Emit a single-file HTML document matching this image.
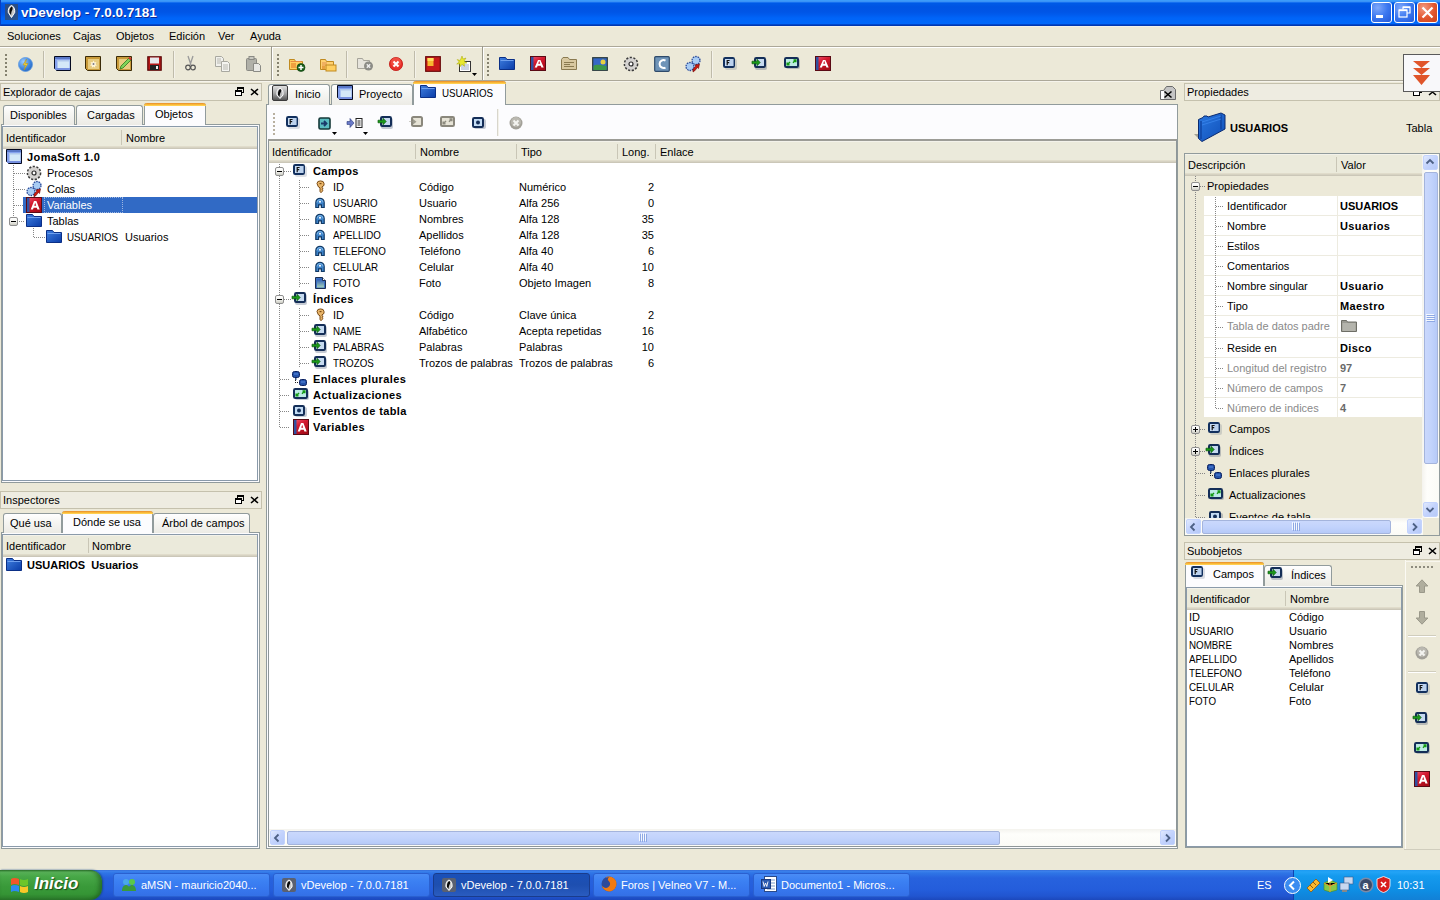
<!DOCTYPE html><html><head><meta charset="utf-8"><title>vDevelop</title><style>
*{margin:0;padding:0;box-sizing:border-box}
html,body{width:1440px;height:900px;overflow:hidden;background:#ECE9D8;font-family:"Liberation Sans",sans-serif;font-size:11px;color:#000}
.a{position:absolute}
svg{position:absolute;overflow:visible}
.t{position:absolute;white-space:nowrap;line-height:13px;margin-left:-1px}
.b{font-weight:bold}
.titlebar{left:0;top:0;width:1440px;height:26px;background:linear-gradient(#3D9BFA 0 1px,#3A92F6 1px 2px,#1570F0 2px 3px,#0059E6 3px 4px,#0054E3 7px,#0055E6 12px,#005CEE 15px,#0064F8 18px,#0068FA 23px 24px,#0048CC 24px 25px,#0038B0 25px 26px)}
.tb{left:0;top:48px;width:1440px;height:32px;background:#ECE9D8}
.ptitle{height:18px;border:1px solid #C5C1AD;background:#EEECE1}
.tab{border:1px solid #919B9C;border-bottom:none;border-radius:3px 3px 0 0;background:linear-gradient(#FFFFFF,#F6F6F3 40%,#ECEBE5)}
.tab.act{background:#FCFCFE;border-top:none}
.tab.act:before{content:"";position:absolute;left:-1px;right:-1px;top:0;height:3px;border-radius:3px 3px 0 0;background:linear-gradient(#E68B2C,#FFC73C 70%,#FFD96A)}
.pane{border:1px solid #919B9C;background:#FCFCFE}
.list{border:1px solid #8A9AAA;background:#fff}
.hdr{height:22px!important;background:linear-gradient(#F3F2EA 0 1px,#EBEADB 1px 19px,#E0DCCB 19px 20px,#D6D2C2 20px 21px,#CBC7B8 21px 22px)}
.hsep{width:1px;background:#C9C6B6}
.sel{background:#316AC5}
.dv{width:1px;background:repeating-linear-gradient(to bottom,#868686 0 1px,transparent 1px 2px)}
.dh{height:1px;background:repeating-linear-gradient(to right,#868686 0 1px,transparent 1px 2px)}
.exp{width:9px;height:9px;border:1px solid #8F8F8F;border-radius:2px;background:linear-gradient(#FFFFFF,#F2F2EE 50%,#CDCDC4)}
.exp:after{content:"";position:absolute;left:1px;top:3px;width:5px;height:1px;background:#000}
.exp.plus:before{content:"";position:absolute;left:3px;top:1px;width:1px;height:5px;background:#000}
.sep{width:2px;background:#BFBBAA;border-right:1px solid #F4F2EA}
.grip{width:2px;background:repeating-linear-gradient(to bottom,#85826F 0 2px,transparent 2px 4px)}
.sbtn{border-radius:2px;background:linear-gradient(135deg,#E0E9FE,#C3D3FD 50%,#B6C9F8);border:1px solid #C3D3FD}
.thumb{border-radius:2px;border:1px solid #A4B4DC;background:#C1D3FB}
</style></head><body>
<div class="a titlebar"></div>
<div class="a" style="left:0;top:0;width:1px;height:26px;background:#0A3FC0"></div><div class="a" style="left:0;top:26px;width:1440px;height:1px;background:#F2F1EA"></div>
<svg style="left:5px;top:4px" width="13" height="16" viewBox="0 0 13 16" ><rect x="0" y="0" width="13" height="16" fill="#3C4A5C" opacity=".7"/><path d="M6.5 1.5C3.8 2.5 3 5.5 3.3 8.5l3.2 5 3.2-5c.3-3-.5-6-3.2-7z" fill="#C8C8C8" stroke="#fff" stroke-width="1"/><path d="M6.7 2.5C5 3.3 4.2 6 4.4 8.5l1.7 2.7c0-2.5.4-3.8 1.2-5.3.7-1.3.4-2.8-.6-3.4z" fill="#0A0A0A"/></svg>
<div class="t b" style="left:22px;top:5px;font-size:13.5px;line-height:15px;color:#fff;text-shadow:1px 1px 0 #0A2A9A">vDevelop - 7.0.0.7181</div>
<div class="a" style="left:1371px;top:2px;width:21px;height:21px;border:1px solid #fff;border-radius:3px;background:radial-gradient(circle at 30% 25%,#7FA8FA,#3C78F0 50%,#2358D8)"></div>
<svg style="left:1371px;top:2px" width="21" height="21" viewBox="0 0 21 21" ><rect x="5" y="13" width="7" height="3" fill="#fff"/></svg>
<div class="a" style="left:1394px;top:2px;width:21px;height:21px;border:1px solid #fff;border-radius:3px;background:radial-gradient(circle at 30% 25%,#7FA8FA,#3C78F0 50%,#2358D8)"></div>
<svg style="left:1394px;top:2px" width="21" height="21" viewBox="0 0 21 21" ><rect x="5" y="8" width="8" height="7" fill="none" stroke="#fff" stroke-width="1.2"/><rect x="5" y="7.5" width="8" height="1.6" fill="#fff"/><path d="M9 7V5h7v6h-3" fill="none" stroke="#fff" stroke-width="1.2"/><rect x="9" y="4.5" width="7" height="1.6" fill="#fff"/></svg>
<div class="a" style="left:1417px;top:2px;width:21px;height:21px;border:1px solid #fff;border-radius:3px;background:radial-gradient(circle at 30% 25%,#F39A80,#E2562E 55%,#C9421C)"></div>
<svg style="left:1417px;top:2px" width="21" height="21" viewBox="0 0 21 21" ><path d="M5.5 5.5l10 10M15.5 5.5l-10 10" stroke="#fff" stroke-width="2.2"/></svg>
<div class="t" style="left:8px;top:30px">Soluciones</div>
<div class="t" style="left:74px;top:30px">Cajas</div>
<div class="t" style="left:117px;top:30px">Objetos</div>
<div class="t" style="left:170px;top:30px">Edición</div>
<div class="t" style="left:219px;top:30px">Ver</div>
<div class="t" style="left:251px;top:30px">Ayuda</div>
<div class="a" style="left:0;top:46px;width:1440px;height:1px;background:#ACA899"></div>
<div class="a" style="left:0;top:47px;width:1440px;height:1px;background:#FFFFFF"></div>
<div class="a tb"></div>
<div class="a" style="left:0;top:80px;width:1440px;height:1px;background:#ACA899"></div>
<div class="a" style="left:0;top:81px;width:1440px;height:1px;background:#F6F4EC"></div>
<div class="a grip" style="left:5px;top:54px;height:22px"></div>
<div class="a grip" style="left:277px;top:54px;height:22px"></div>
<div class="a grip" style="left:487px;top:54px;height:22px"></div>
<div class="a sep" style="left:43px;top:51px;height:27px"></div>
<div class="a sep" style="left:173px;top:51px;height:27px"></div>
<div class="a sep" style="left:346px;top:51px;height:27px"></div>
<div class="a sep" style="left:414px;top:51px;height:27px"></div>
<div class="a sep" style="left:711px;top:51px;height:27px"></div>
<div class="a" style="left:271px;top:46px;width:1px;height:34px;background:#9C9A8C"></div><div class="a" style="left:272px;top:48px;width:1px;height:32px;background:#FFFFFF"></div>
<div class="a" style="left:482px;top:46px;width:1px;height:34px;background:#9C9A8C"></div><div class="a" style="left:483px;top:48px;width:1px;height:32px;background:#FFFFFF"></div>
<svg style="left:18px;top:57px" width="15" height="15" viewBox="0 0 15 15" ><defs><radialGradient id="gl" cx=".35" cy=".3" r=".8"><stop offset="0" stop-color="#9CCBFF"/><stop offset=".6" stop-color="#3F86E0"/><stop offset="1" stop-color="#2060B8"/></radialGradient></defs><circle cx="7.5" cy="7.5" r="7" fill="url(#gl)" stroke="#5F9BE0" stroke-width=".8"/><path d="M8.5 2l-3.5 6h2.5l-1.5 5 4-6.5h-2.5z" fill="#F3D23A" stroke="#B58F10" stroke-width=".5"/></svg>
<svg style="left:54px;top:56px" width="17" height="15" viewBox="0 0 17 15" ><path d="M.5 .5h16v14h-14l-2-2z" fill="#86A2EE" stroke="#050A20"/><path d="M1 1h15v2h-15z" fill="#5A78C8"/><rect x="3.5" y="4" width="12" height="8" fill="#D4E8F8"/><rect x="3.5" y="4" width="12" height="1.5" fill="#B0C8EC"/><rect x="1" y="12" width="15" height="2" fill="#7690E0"/></svg>
<svg style="left:85px;top:56px" width="16" height="15" viewBox="0 0 16 15" ><path d="M.5 .5h15v14h-13l-2-2z" fill="#C89A3A" stroke="#3A2A08"/><rect x="3" y="3" width="11" height="10" fill="#E8CC80"/><path d="M8.5 4.5l1 2 2-.5-1 2 1.5 1.5-2 .3.2 2-1.7-1.2-1.7 1.2.2-2-2-.3 1.5-1.5-1-2 2 .5z" fill="#FFF6DC"/><circle cx="8.5" cy="8" r="1" fill="#7A7A88"/></svg>
<svg style="left:116px;top:56px" width="17" height="15" viewBox="0 0 17 15" ><path d="M.5 .5h15v14h-13l-2-2z" fill="#C89A3A" stroke="#3A2A08"/><rect x="3" y="3" width="11" height="10" fill="#E8CC80"/><path d="M4 13l1-3 8-8 2 2-8 8z" fill="#7ED35A" stroke="#2C7A1C" stroke-width=".8"/><path d="M13 1.5l2 2" stroke="#D03030" stroke-width="2"/></svg>
<svg style="left:147px;top:56px" width="15" height="15" viewBox="0 0 15 15" ><rect x=".8" y=".8" width="13.4" height="13.4" fill="#B81818" stroke="#5A0808" stroke-width="1.2"/><rect x="3" y="1.5" width="9" height="6" fill="#E8E8EC"/><rect x="3" y="9" width="9" height="5" fill="#222"/><rect x="9" y="10" width="2" height="3" fill="#eee"/></svg>
<svg style="left:185px;top:56px" width="11" height="15" viewBox="0 0 11 15" ><path d="M3 0l3 9M8 0l-3 9" stroke="#9A9A9A" stroke-width="1.3"/><circle cx="3" cy="11.5" r="2.3" fill="none" stroke="#555" stroke-width="1.2"/><circle cx="8" cy="11.5" r="2.3" fill="none" stroke="#555" stroke-width="1.2"/></svg>
<svg style="left:215px;top:56px" width="16" height="16" viewBox="0 0 16 16" ><path d="M.5 .5h6l2 2v8h-8z" fill="#F0F0EC" stroke="#A8A8A0"/><path d="M6.5 5.5h6l2 2v8h-8z" fill="#F4F4F0" stroke="#A8A8A0"/><path d="M2 3h4M2 5h4M2 7h4M8 9h5M8 11h5M8 13h5" stroke="#B8B8B0"/></svg>
<svg style="left:246px;top:56px" width="16" height="16" viewBox="0 0 16 16" ><rect x=".5" y="2.5" width="10" height="12" rx="1" fill="#B0B0A8" stroke="#8A8A84"/><rect x="3" y=".5" width="5" height="3" fill="#C8C8C0" stroke="#8A8A84"/><path d="M7.5 7.5h5l2 2v6h-7z" fill="#E8E8E4" stroke="#8A8A84"/></svg>
<svg style="left:289px;top:56px" width="17" height="16" viewBox="0 0 17 16" ><path d="M.5 3.5v10h13v-8h-7l-1-2z" fill="#FFCF60" stroke="#C08A20"/><path d="M1.5 5.5h11" stroke="#E88A40"/><rect x="2" y="7" width="5" height="5" fill="#F0A040"/><circle cx="12" cy="11.5" r="4" fill="#1A5E1A" stroke="#0A3A0A" stroke-width=".6"/><path d="M12 9v5M9.5 11.5h5" stroke="#fff" stroke-width="1.5"/></svg>
<svg style="left:320px;top:56px" width="17" height="16" viewBox="0 0 17 16" ><path d="M.5 3.5v10h13v-8h-7l-1-2z" fill="#FFD070" stroke="#C08A20"/><rect x="2" y="6" width="5" height="4" fill="#F0B060"/><rect x="6" y="9" width="10" height="6" fill="#FFCF60" stroke="#C08A20"/><rect x="2" y="10" width="3" height="3" fill="#E8A040"/></svg>
<svg style="left:357px;top:56px" width="17" height="15" viewBox="0 0 17 15" ><path d="M.5 2.5v10h12v-8h-6l-1-2z" fill="#E6E4DC" stroke="#A6A49A"/><circle cx="11.5" cy="10" r="4.5" fill="#8C8C86"/><path d="M9.8 8.3l3.4 3.4M13.2 8.3l-3.4 3.4" stroke="#EEE" stroke-width="1.4"/></svg>
<svg style="left:389px;top:57px" width="14" height="14" viewBox="0 0 14 14" ><circle cx="7" cy="7" r="6.6" fill="#E8302A" stroke="#C01A14" stroke-width=".8"/><circle cx="7" cy="5.5" r="5" fill="#F86A5A" opacity=".5"/><path d="M4.5 4.5l5 5M9.5 4.5l-5 5" stroke="#fff" stroke-width="2"/></svg>
<svg style="left:425px;top:56px" width="16" height="16" viewBox="0 0 16 16" ><rect x=".7" y=".7" width="14.6" height="14.6" fill="#C81A1A" stroke="#6A0A0A" stroke-width="1.2"/><rect x="2.5" y="2" width="6" height="8" fill="#F8B830"/><rect x="2.5" y="2" width="6" height="3" fill="#FFE060"/></svg>
<svg style="left:456px;top:56px" width="16" height="16" viewBox="0 0 16 16" ><rect x="3.5" y="5.5" width="11" height="10" fill="#fff" stroke="#333"/><path d="M5 9h8M5 11h8M5 13h8" stroke="#9AA8C8"/><path d="M6 0l1 3 3-1-2 3 3 2-3 .3.5 3-2.5-2-2 2.5-.3-3-3 .2 2.5-2-2-2.5 3 1z" fill="#E8E830" stroke="#A8A800" stroke-width=".5"/></svg>
<svg style="left:472px;top:73px" width="5" height="3" viewBox="0 0 5 3" ><path d="M0 0h5l-2.5 3z" fill="#000"/></svg>
<svg style="left:499px;top:57px" width="16" height="13" viewBox="0 0 16 13" ><defs><linearGradient id="fg" x1="0" y1="0" x2="1" y2="1"><stop offset="0" stop-color="#3F7FE0"/><stop offset="1" stop-color="#0A3CA8"/></linearGradient></defs><path d="M0.5 0.5h6l1.5 2h7.5v10h-15z" fill="url(#fg)" stroke="#0B2F86"/><path d="M1.5 3.5h13" stroke="#6FA0EE"/></svg>
<svg style="left:530px;top:56px" width="16" height="15" viewBox="0 0 16 15" ><defs><linearGradient id="vr" x1="0" y1="0" x2=".6" y2="1"><stop offset="0" stop-color="#F05A78"/><stop offset=".45" stop-color="#D41A30"/><stop offset="1" stop-color="#A80C18"/></linearGradient></defs><rect x=".5" y=".5" width="15" height="14" fill="url(#vr)" stroke="#5A0A14"/><rect x="1" y="1" width="2.5" height="13" fill="#3050A0"/><path d="M4.7 11.5L8 4h2.4l3.3 7.5h-2.3l-.6-1.8h-3.2l-.6 1.8z M8.2 7.7h2l-1-3z" fill="#fff" fill-rule="evenodd"/></svg>
<svg style="left:561px;top:57px" width="16" height="13" viewBox="0 0 16 13" ><path d="M.5 2.5v10h15v-10h-7l-1.5-2h-5l-1.5 2z" fill="#D8C8A0" stroke="#8A7A50"/><path d="M3 5.5h10M3 7.5h6M3 9.5h10" stroke="#8A7A50"/></svg>
<svg style="left:592px;top:57px" width="16" height="14" viewBox="0 0 16 14" ><rect x=".7" y=".7" width="14.6" height="12.6" fill="#3468C8" stroke="#2A3A3A" stroke-width="1.2"/><path d="M1.5 9c3-2 6-1 13 0v4h-13z" fill="#3C9848"/><circle cx="11" cy="5" r="2.5" fill="#E8D040"/></svg>
<svg style="left:623px;top:56px" width="16" height="16" viewBox="0 0 16 16" ><circle cx="8" cy="8" r="6.6" fill="#D4D2D0" stroke="#3A3A3A" stroke-width="1.5" stroke-dasharray="2.2 1.5"/><circle cx="8" cy="8" r="2" fill="#fff" stroke="#2A2A2A" stroke-width="1.2"/></svg>
<svg style="left:654px;top:56px" width="16" height="16" viewBox="0 0 16 16" ><rect x=".7" y=".7" width="14.6" height="14.6" rx="1" fill="#6F94B8" stroke="#2E4A6A" stroke-width="1.2"/><path d="M11.5 4.5a4 4 0 1 0 0 7" fill="none" stroke="#fff" stroke-width="2"/></svg>
<svg style="left:685px;top:56px" width="17" height="17" viewBox="0 0 17 17" ><circle cx="11" cy="4.5" r="4" fill="#A8CCF4" stroke="#2A4A9A" stroke-width="1.3" stroke-dasharray="1.6 .9"/><circle cx="5" cy="10.5" r="4" fill="#A8CCF4" stroke="#2A4A9A" stroke-width="1.3" stroke-dasharray="1.6 .9"/><path d="M8 16v-3l3-3-1-1 4.5-1-1 4.5-1-1-3 3.5z" fill="#C81A10" stroke="#6A0A0A" stroke-width=".6"/></svg>
<svg style="left:723px;top:57px" width="14" height="13" viewBox="0 0 14 13" ><rect x="2" y="2" width="12" height="11" rx="2" fill="#1C2F52" opacity=".15"/><rect x="1" y="1" width="10" height="9" rx="1.2" fill="#C8DCF4" stroke="#12305E" stroke-width="2"/><rect x="6" y="2" width="5" height="7" fill="#B4CCEA" opacity=".6"/><path d="M4.2 3v5.2M4 3.5h2.6M4 5.7h2.2" stroke="#111" stroke-width="1.2" fill="none"/></svg>
<svg style="left:752px;top:57px" width="15" height="13" viewBox="0 0 15 13" ><rect x="3" y="2" width="12" height="11" rx="2" fill="#1C2F52" opacity=".25"/><rect x="3" y="1" width="10" height="9" rx="1.2" fill="#C6DAF0" stroke="#142E58" stroke-width="2"/><path d="M0 4.2h5v-2l3.2 3.3-3.2 3.3v-2h-5z" fill="#1A9A1A" stroke="#0A5A0A" stroke-width=".7"/></svg>
<svg style="left:784px;top:57px" width="16" height="12" viewBox="0 0 16 12" ><rect x="2" y="2" width="14" height="10" rx="2" fill="#1C2F52" opacity="0.25"/><rect x="1" y="1" width="13" height="9" rx="1.2" fill="#BDEBE4" stroke="#142E58" stroke-width="2"/><path d="M3.5 7.5l2.5-2.5M3.2 5.5v2.3h2.3M11.5 3.2l-2.5 2.5M11.8 5.2V3H9.5" stroke="#149A14" stroke-width="1.5" fill="none"/></svg>
<svg style="left:815px;top:56px" width="16" height="15" viewBox="0 0 16 15" ><defs><linearGradient id="vr" x1="0" y1="0" x2=".6" y2="1"><stop offset="0" stop-color="#F05A78"/><stop offset=".45" stop-color="#D41A30"/><stop offset="1" stop-color="#A80C18"/></linearGradient></defs><rect x=".5" y=".5" width="15" height="14" fill="url(#vr)" stroke="#5A0A14"/><rect x="1" y="1" width="2.5" height="13" fill="#3050A0"/><path d="M4.7 11.5L8 4h2.4l3.3 7.5h-2.3l-.6-1.8h-3.2l-.6 1.8z M8.2 7.7h2l-1-3z" fill="#fff" fill-rule="evenodd"/></svg>
<div class="a ptitle" style="left:0px;top:83px;width:262px"></div>
<div class="t" style="left:4px;top:86px">Explorador de cajas</div>
<svg style="left:235px;top:87px" width="9" height="9" viewBox="0 0 9 9" ><rect x="2.5" y=".5" width="6" height="5" fill="none" stroke="#000"/><rect x="2" y="0" width="7" height="2" fill="#000"/><rect x=".5" y="3.5" width="6" height="5" fill="#fff" stroke="#000"/><rect x="0" y="3" width="7" height="2" fill="#000"/></svg>
<svg style="left:250px;top:88px" width="9" height="8" viewBox="0 0 9 8" ><path d="M1 1l7 6M8 1l-7 6" stroke="#000" stroke-width="1.6"/></svg>
<div class="a pane" style="left:1px;top:124px;width:259px;height:359px"></div>
<div class="a tab" style="left:3px;top:105px;width:72px;height:20px"></div>
<div class="t" style="left:11px;top:109px">Disponibles</div>
<div class="a tab" style="left:76px;top:105px;width:67px;height:20px"></div>
<div class="t" style="left:88px;top:109px">Cargadas</div>
<div class="a tab act" style="left:144px;top:103px;width:62px;height:22px"></div>
<div class="t" style="left:156px;top:108px">Objetos</div>
<div class="a list" style="left:2px;top:126px;width:256px;height:355px"></div>
<div class="a hdr" style="left:3px;top:127px;width:254px;height:21px"></div>
<div class="a hsep" style="left:121px;top:130px;height:15px"></div>
<div class="t" style="left:7px;top:132px">Identificador</div><div class="t" style="left:127px;top:132px">Nombre</div>
<div class="a dv" style="left:13px;top:165px;height:56px"></div>
<div class="a dh" style="left:14px;top:173px;width:11px"></div>
<div class="a dh" style="left:14px;top:189px;width:11px"></div>
<div class="a dh" style="left:14px;top:205px;width:11px"></div>
<div class="a dh" style="left:19px;top:221px;width:6px"></div>
<div class="a dv" style="left:33px;top:228px;height:10px"></div>
<div class="a dh" style="left:34px;top:237px;width:11px"></div>
<div class="a sel" style="left:23px;top:197px;width:234px;height:16px"></div>
<div class="a" style="left:44px;top:197px;width:79px;height:16px;border:1px dotted #9DB6E0"></div>
<svg style="left:6px;top:149px" width="16" height="15" viewBox="0 0 16 15" ><path d="M.5 .5h15v14h-13l-2-2z" fill="#86A2EE" stroke="#050A20"/><path d="M1 1h14v2h-14z" fill="#5A78C8"/><rect x="3.5" y="4" width="11" height="8" fill="#D4E8F8"/><rect x="3.5" y="4" width="11" height="1.5" fill="#B0C8EC"/><rect x="1" y="12" width="14" height="2" fill="#7690E0"/></svg>
<svg style="left:26px;top:165px" width="16" height="16" viewBox="0 0 16 16" ><circle cx="8" cy="8" r="6.6" fill="#D4D2D0" stroke="#3A3A3A" stroke-width="1.5" stroke-dasharray="2.2 1.5"/><circle cx="8" cy="8" r="2" fill="#fff" stroke="#2A2A2A" stroke-width="1.2"/></svg>
<svg style="left:26px;top:181px" width="17" height="17" viewBox="0 0 17 17" ><circle cx="11" cy="4.5" r="4" fill="#A8CCF4" stroke="#2A4A9A" stroke-width="1.3" stroke-dasharray="1.6 .9"/><circle cx="5" cy="10.5" r="4" fill="#A8CCF4" stroke="#2A4A9A" stroke-width="1.3" stroke-dasharray="1.6 .9"/><path d="M8 16v-3l3-3-1-1 4.5-1-1 4.5-1-1-3 3.5z" fill="#C81A10" stroke="#6A0A0A" stroke-width=".6"/></svg>
<svg style="left:26px;top:197px" width="16" height="16" viewBox="0 0 16 16" ><defs><linearGradient id="vr" x1="0" y1="0" x2=".6" y2="1"><stop offset="0" stop-color="#F05A78"/><stop offset=".45" stop-color="#D41A30"/><stop offset="1" stop-color="#A80C18"/></linearGradient></defs><rect x=".5" y=".5" width="15" height="15" fill="url(#vr)" stroke="#5A0A14"/><rect x="1" y="1" width="2.5" height="14" fill="#3050A0"/><path d="M4.7 12.5L8 4h2.4l3.3 8.5h-2.3l-.6-1.8h-3.2l-.6 1.8z M8.2 8.7h2l-1-3z" fill="#fff" fill-rule="evenodd"/></svg>
<div class="a exp" style="left:9px;top:217px"></div>
<svg style="left:26px;top:214px" width="16" height="13" viewBox="0 0 16 13" ><defs><linearGradient id="fg" x1="0" y1="0" x2="1" y2="1"><stop offset="0" stop-color="#3F7FE0"/><stop offset="1" stop-color="#0A3CA8"/></linearGradient></defs><path d="M0.5 0.5h6l1.5 2h7.5v10h-15z" fill="url(#fg)" stroke="#0B2F86"/><path d="M1.5 3.5h13" stroke="#6FA0EE"/></svg>
<svg style="left:46px;top:230px" width="16" height="13" viewBox="0 0 16 13" ><defs><linearGradient id="fg" x1="0" y1="0" x2="1" y2="1"><stop offset="0" stop-color="#3F7FE0"/><stop offset="1" stop-color="#0A3CA8"/></linearGradient></defs><path d="M0.5 0.5h6l1.5 2h7.5v10h-15z" fill="url(#fg)" stroke="#0B2F86"/><path d="M1.5 3.5h13" stroke="#6FA0EE"/></svg>
<div class="t b" style="left:28px;top:151px;color:#000;letter-spacing:.4px">JomaSoft 1.0</div>
<div class="t" style="left:48px;top:167px;color:#000">Procesos</div>
<div class="t" style="left:48px;top:183px;color:#000">Colas</div>
<div class="t" style="left:48px;top:199px;color:#fff">Variables</div>
<div class="t" style="left:48px;top:215px;color:#000">Tablas</div>
<div class="t" style="left:68px;top:231px"><span style="display:inline-block;transform:scaleX(.89);transform-origin:0 0">USUARIOS</span></div><div class="t" style="left:126px;top:231px">Usuarios</div>
<div class="a ptitle" style="left:0px;top:491px;width:262px"></div>
<div class="t" style="left:4px;top:494px">Inspectores</div>
<svg style="left:235px;top:495px" width="9" height="9" viewBox="0 0 9 9" ><rect x="2.5" y=".5" width="6" height="5" fill="none" stroke="#000"/><rect x="2" y="0" width="7" height="2" fill="#000"/><rect x=".5" y="3.5" width="6" height="5" fill="#fff" stroke="#000"/><rect x="0" y="3" width="7" height="2" fill="#000"/></svg>
<svg style="left:250px;top:496px" width="9" height="8" viewBox="0 0 9 8" ><path d="M1 1l7 6M8 1l-7 6" stroke="#000" stroke-width="1.6"/></svg>
<div class="a pane" style="left:1px;top:532px;width:259px;height:317px"></div>
<div class="a tab" style="left:3px;top:513px;width:59px;height:20px"></div>
<div class="t" style="left:11px;top:517px">Qué usa</div>
<div class="a tab act" style="left:62px;top:511px;width:91px;height:22px"></div>
<div class="t" style="left:74px;top:516px">Dónde se usa</div>
<div class="a tab" style="left:153px;top:513px;width:97px;height:20px"></div>
<div class="t" style="left:163px;top:517px">Árbol de campos</div>
<div class="a list" style="left:2px;top:534px;width:256px;height:313px"></div>
<div class="a hdr" style="left:3px;top:535px;width:254px;height:21px"></div>
<div class="a hsep" style="left:88px;top:538px;height:15px"></div>
<div class="t" style="left:7px;top:540px">Identificador</div><div class="t" style="left:93px;top:540px">Nombre</div>
<svg style="left:6px;top:558px" width="16" height="13" viewBox="0 0 16 13" ><defs><linearGradient id="fg" x1="0" y1="0" x2="1" y2="1"><stop offset="0" stop-color="#3F7FE0"/><stop offset="1" stop-color="#0A3CA8"/></linearGradient></defs><path d="M0.5 0.5h6l1.5 2h7.5v10h-15z" fill="url(#fg)" stroke="#0B2F86"/><path d="M1.5 3.5h13" stroke="#6FA0EE"/></svg>
<div class="t b" style="left:28px;top:559px">USUARIOS&nbsp; Usuarios</div>
<div class="a pane" style="left:266px;top:104px;width:912px;height:745px"></div>
<div class="a tab" style="left:268px;top:84px;width:62px;height:21px"></div>
<svg style="left:272px;top:85px" width="16" height="16" viewBox="0 0 16 16" ><defs><linearGradient id="ig" x1="0" y1="0" x2="0" y2="1"><stop offset="0" stop-color="#E4E4E4"/><stop offset=".5" stop-color="#A8A8A8"/><stop offset="1" stop-color="#505050"/></linearGradient></defs><rect x=".5" y=".5" width="15" height="15" rx="1.5" fill="url(#ig)" stroke="#3A3A3A"/><path d="M8 3C5.3 4 4.6 7 5 10l3 3.5 3-3.5c.4-3-.3-6-3-7z" fill="#B8B8B8" stroke="#fff" stroke-width="1"/><path d="M8.2 4C6.5 4.8 5.8 7.5 6 10l1.6 2c0-2.5.5-3.5 1.3-5 .6-1.2.3-2.5-.7-3z" fill="#0A0A0A"/></svg>
<div class="t" style="left:296px;top:88px">Inicio</div>
<div class="a tab" style="left:331px;top:84px;width:82px;height:21px"></div>
<svg style="left:337px;top:85px" width="16" height="15" viewBox="0 0 16 15" ><path d="M.5 .5h15v14h-13l-2-2z" fill="#86A2EE" stroke="#050A20"/><path d="M1 1h14v2h-14z" fill="#5A78C8"/><rect x="3.5" y="4" width="11" height="8" fill="#D4E8F8"/><rect x="3.5" y="4" width="11" height="1.5" fill="#B0C8EC"/><rect x="1" y="12" width="14" height="2" fill="#7690E0"/></svg>
<div class="t" style="left:360px;top:88px">Proyecto</div>
<div class="a tab act" style="left:413px;top:81px;width:93px;height:24px"></div>
<svg style="left:420px;top:85px" width="16" height="13" viewBox="0 0 16 13" ><defs><linearGradient id="fg" x1="0" y1="0" x2="1" y2="1"><stop offset="0" stop-color="#3F7FE0"/><stop offset="1" stop-color="#0A3CA8"/></linearGradient></defs><path d="M0.5 0.5h6l1.5 2h7.5v10h-15z" fill="url(#fg)" stroke="#0B2F86"/><path d="M1.5 3.5h13" stroke="#6FA0EE"/></svg>
<div class="t" style="left:443px;top:87px"><span style="display:inline-block;transform:scaleX(.89);transform-origin:0 0">USUARIOS</span></div>
<svg style="left:1160px;top:86px" width="16" height="14" viewBox="0 0 16 14" ><path d="M.5 13.5v-9h3l3-4h6l3 3v10z" fill="#C4C4C4" stroke="#6A6A6A"/><rect x="1" y="5" width="3" height="8" fill="#fff"/><path d="M4.5 5.5l7 6M11.5 5.5l-7 6" stroke="#000" stroke-width="1.6"/></svg>
<div class="a grip" style="left:273px;top:113px;height:22px;background:repeating-linear-gradient(to bottom,#B8B0A0 0 2px,transparent 2px 4px)"></div>
<svg style="left:286px;top:116px" width="14" height="13" viewBox="0 0 14 13" ><rect x="2" y="2" width="12" height="11" rx="2" fill="#1C2F52" opacity=".15"/><rect x="1" y="1" width="10" height="9" rx="1.2" fill="#C8DCF4" stroke="#12305E" stroke-width="2"/><rect x="6" y="2" width="5" height="7" fill="#B4CCEA" opacity=".6"/><path d="M4.2 3v5.2M4 3.5h2.6M4 5.7h2.2" stroke="#111" stroke-width="1.2" fill="none"/></svg>
<svg style="left:318px;top:117px" width="13" height="13" viewBox="0 0 13 13" ><rect x="1" y="1" width="11" height="11" rx="1.5" fill="#5ABCC0" stroke="#153838" stroke-width="1.6"/><path d="M3 6.5h5M6 4l2.5 2.5L6 9" stroke="#1A3A6A" stroke-width="1.8" fill="none"/></svg>
<svg style="left:332px;top:132px" width="5" height="3" viewBox="0 0 5 3" ><path d="M0 0h5l-2.5 3z" fill="#000"/></svg>
<svg style="left:347px;top:118px" width="16" height="10" viewBox="0 0 16 10" ><path d="M0 3.5h3v-3l4 4.5-4 4.5v-3h-3z" fill="#6A7AC8" stroke="#2A3A7A" stroke-width=".6"/><rect x="9" y=".5" width="6" height="9" fill="#fff" stroke="#222"/><path d="M10.5 3h3M10.5 5h3M10.5 7h3" stroke="#222"/></svg>
<svg style="left:363px;top:132px" width="5" height="3" viewBox="0 0 5 3" ><path d="M0 0h5l-2.5 3z" fill="#000"/></svg>
<svg style="left:378px;top:116px" width="15" height="13" viewBox="0 0 15 13" ><rect x="3" y="2" width="12" height="11" rx="2" fill="#1C2F52" opacity=".25"/><rect x="3" y="1" width="10" height="9" rx="1.2" fill="#C6DAF0" stroke="#142E58" stroke-width="2"/><path d="M0 4.2h5v-2l3.2 3.3-3.2 3.3v-2h-5z" fill="#1A9A1A" stroke="#0A5A0A" stroke-width=".7"/></svg>
<svg style="left:409px;top:116px" width="15" height="12" viewBox="0 0 15 12" ><rect x="3" y="1" width="10" height="9" rx="1.5" fill="#E6E3D6" stroke="#8A877C" stroke-width="2"/><path d="M0 5.5h4v-2.5l3.5 2.8-3.5 2.8v-2.5h-4z" fill="#9C9A8E"/></svg>
<svg style="left:440px;top:116px" width="16" height="12" viewBox="0 0 16 12" ><rect x="2" y="2" width="14" height="10" rx="2" fill="#1C2F52" opacity="0"/><rect x="1" y="1" width="13" height="9" rx="1.2" fill="#E6E3D6" stroke="#8A877C" stroke-width="2"/><path d="M3.5 7.5l2.5-2.5M3.2 5.5v2.3h2.3M11.5 3.2l-2.5 2.5M11.8 5.2V3H9.5" stroke="#8C8A7E" stroke-width="1.5" fill="none"/></svg>
<svg style="left:472px;top:117px" width="14" height="12" viewBox="0 0 14 12" ><rect x="2" y="2" width="12" height="10" rx="2" fill="#1C2F52" opacity=".25"/><rect x="1" y="1" width="10" height="9" rx="1.2" fill="#C4DCF4" stroke="#142E58" stroke-width="2"/><circle cx="6" cy="5.5" r="2" fill="#142E58"/></svg>
<div class="a sep" style="left:497px;top:109px;height:27px;background:#D8D6CC"></div>
<svg style="left:509px;top:116px" width="14" height="14" viewBox="0 0 14 14" ><circle cx="7" cy="7" r="6.5" fill="#A2A098"/><circle cx="7" cy="6" r="5" fill="#BAB8B0"/><path d="M4.5 4.5l5 5M9.5 4.5l-5 5" stroke="#F4F4F0" stroke-width="2"/></svg>
<div class="a list" style="left:268px;top:139px;width:909px;height:708px;border-color:#8E9698;border-top:2px solid #9C9C96"></div>
<div class="a hdr" style="left:269px;top:141px;width:907px;height:21px"></div>
<div class="a hsep" style="left:415px;top:144px;height:15px"></div>
<div class="a hsep" style="left:516px;top:144px;height:15px"></div>
<div class="a hsep" style="left:617px;top:144px;height:15px"></div>
<div class="a hsep" style="left:655px;top:144px;height:15px"></div>
<div class="t" style="left:273px;top:146px">Identificador</div>
<div class="t" style="left:421px;top:146px">Nombre</div>
<div class="t" style="left:522px;top:146px">Tipo</div>
<div class="t" style="left:623px;top:146px">Long.</div>
<div class="t" style="left:661px;top:146px">Enlace</div>
<div class="a dv" style="left:279px;top:164px;height:263px"></div>
<div class="a dv" style="left:299px;top:180px;height:108px"></div>
<div class="a dv" style="left:299px;top:308px;height:60px"></div>
<div class="a dh" style="left:284px;top:171px;width:7px"></div>
<div class="a exp" style="left:275px;top:167px"></div>
<div class="a dh" style="left:300px;top:187px;width:10px"></div>
<div class="a dh" style="left:300px;top:203px;width:10px"></div>
<div class="a dh" style="left:300px;top:219px;width:10px"></div>
<div class="a dh" style="left:300px;top:235px;width:10px"></div>
<div class="a dh" style="left:300px;top:251px;width:10px"></div>
<div class="a dh" style="left:300px;top:267px;width:10px"></div>
<div class="a dh" style="left:300px;top:283px;width:10px"></div>
<div class="a dh" style="left:284px;top:299px;width:7px"></div>
<div class="a exp" style="left:275px;top:295px"></div>
<div class="a dh" style="left:300px;top:315px;width:10px"></div>
<div class="a dh" style="left:300px;top:331px;width:10px"></div>
<div class="a dh" style="left:300px;top:347px;width:10px"></div>
<div class="a dh" style="left:300px;top:363px;width:10px"></div>
<div class="a dh" style="left:280px;top:379px;width:10px"></div>
<div class="a dh" style="left:280px;top:395px;width:10px"></div>
<div class="a dh" style="left:280px;top:411px;width:10px"></div>
<div class="a dh" style="left:280px;top:427px;width:10px"></div>
<svg style="left:293px;top:164px" width="14" height="13" viewBox="0 0 14 13" ><rect x="2" y="2" width="12" height="11" rx="2" fill="#1C2F52" opacity=".15"/><rect x="1" y="1" width="10" height="9" rx="1.2" fill="#C8DCF4" stroke="#12305E" stroke-width="2"/><rect x="6" y="2" width="5" height="7" fill="#B4CCEA" opacity=".6"/><path d="M4.2 3v5.2M4 3.5h2.6M4 5.7h2.2" stroke="#111" stroke-width="1.2" fill="none"/></svg>
<div class="t b" style="left:314px;top:165px;letter-spacing:.4px">Campos</div>
<svg style="left:316px;top:181px" width="9" height="12" viewBox="0 0 9 12" ><path d="M1 2.5a3.5 2.6 0 0 1 7 0v1.5a3.5 2.3 0 0 1-2 1.8v1l1.2 .8-1.2 1 1 1-1.8 1.8h-.6l-.6-1v-3.6a3.5 2.3 0 0 1-2-1.8z" fill="#E9B66A" stroke="#7A4A14" stroke-width="1"/><rect x="3.5" y="2" width="2" height="1.2" fill="#7A4A14"/></svg>
<div class="t" style="left:334px;top:181px">ID</div>
<div class="t" style="left:420px;top:181px">Código</div>
<div class="t" style="left:520px;top:181px">Numérico</div>
<div class="t" style="right:786px;top:181px">2</div>
<svg style="left:315px;top:198px" width="10" height="10" viewBox="0 0 10 10" ><path d="M.8 9.5v-5a4.2 4.2 0 0 1 8.4 0v5h-2.8v-2.6h-2.8v2.6z" fill="#3C82C8" stroke="#123A66" stroke-width="1.2"/><path d="M2 4.5a3 3 0 0 1 6 0" stroke="#7BB6EA" fill="none"/><circle cx="5" cy="3.8" r="1" fill="#fff"/></svg>
<div class="t" style="left:334px;top:197px"><span style="display:inline-block;transform:scaleX(.89);transform-origin:0 0">USUARIO</span></div>
<div class="t" style="left:420px;top:197px">Usuario</div>
<div class="t" style="left:520px;top:197px">Alfa 256</div>
<div class="t" style="right:786px;top:197px">0</div>
<svg style="left:315px;top:214px" width="10" height="10" viewBox="0 0 10 10" ><path d="M.8 9.5v-5a4.2 4.2 0 0 1 8.4 0v5h-2.8v-2.6h-2.8v2.6z" fill="#3C82C8" stroke="#123A66" stroke-width="1.2"/><path d="M2 4.5a3 3 0 0 1 6 0" stroke="#7BB6EA" fill="none"/><circle cx="5" cy="3.8" r="1" fill="#fff"/></svg>
<div class="t" style="left:334px;top:213px"><span style="display:inline-block;transform:scaleX(.89);transform-origin:0 0">NOMBRE</span></div>
<div class="t" style="left:420px;top:213px">Nombres</div>
<div class="t" style="left:520px;top:213px">Alfa 128</div>
<div class="t" style="right:786px;top:213px">35</div>
<svg style="left:315px;top:230px" width="10" height="10" viewBox="0 0 10 10" ><path d="M.8 9.5v-5a4.2 4.2 0 0 1 8.4 0v5h-2.8v-2.6h-2.8v2.6z" fill="#3C82C8" stroke="#123A66" stroke-width="1.2"/><path d="M2 4.5a3 3 0 0 1 6 0" stroke="#7BB6EA" fill="none"/><circle cx="5" cy="3.8" r="1" fill="#fff"/></svg>
<div class="t" style="left:334px;top:229px"><span style="display:inline-block;transform:scaleX(.89);transform-origin:0 0">APELLIDO</span></div>
<div class="t" style="left:420px;top:229px">Apellidos</div>
<div class="t" style="left:520px;top:229px">Alfa 128</div>
<div class="t" style="right:786px;top:229px">35</div>
<svg style="left:315px;top:246px" width="10" height="10" viewBox="0 0 10 10" ><path d="M.8 9.5v-5a4.2 4.2 0 0 1 8.4 0v5h-2.8v-2.6h-2.8v2.6z" fill="#3C82C8" stroke="#123A66" stroke-width="1.2"/><path d="M2 4.5a3 3 0 0 1 6 0" stroke="#7BB6EA" fill="none"/><circle cx="5" cy="3.8" r="1" fill="#fff"/></svg>
<div class="t" style="left:334px;top:245px"><span style="display:inline-block;transform:scaleX(.89);transform-origin:0 0">TELEFONO</span></div>
<div class="t" style="left:420px;top:245px">Teléfono</div>
<div class="t" style="left:520px;top:245px">Alfa 40</div>
<div class="t" style="right:786px;top:245px">6</div>
<svg style="left:315px;top:262px" width="10" height="10" viewBox="0 0 10 10" ><path d="M.8 9.5v-5a4.2 4.2 0 0 1 8.4 0v5h-2.8v-2.6h-2.8v2.6z" fill="#3C82C8" stroke="#123A66" stroke-width="1.2"/><path d="M2 4.5a3 3 0 0 1 6 0" stroke="#7BB6EA" fill="none"/><circle cx="5" cy="3.8" r="1" fill="#fff"/></svg>
<div class="t" style="left:334px;top:261px"><span style="display:inline-block;transform:scaleX(.89);transform-origin:0 0">CELULAR</span></div>
<div class="t" style="left:420px;top:261px">Celular</div>
<div class="t" style="left:520px;top:261px">Alfa 40</div>
<div class="t" style="right:786px;top:261px">10</div>
<svg style="left:315px;top:277px" width="11" height="12" viewBox="0 0 11 12" ><path d="M.5 .5h7l3 3v8h-10z" fill="#3A6FC4" stroke="#1C2F52"/><path d="M2 2h5v2.5h2v6h-7z" fill="url(#ph)"/><defs><linearGradient id="ph" x1="0" y1="0" x2="0" y2="1"><stop offset="0" stop-color="#2A5AB8"/><stop offset="1" stop-color="#A6D2B8"/></linearGradient></defs><path d="M7.5 .5v3h3" fill="#fff" stroke="#1C2F52"/></svg>
<div class="t" style="left:334px;top:277px"><span style="display:inline-block;transform:scaleX(.89);transform-origin:0 0">FOTO</span></div>
<div class="t" style="left:420px;top:277px">Foto</div>
<div class="t" style="left:520px;top:277px">Objeto Imagen</div>
<div class="t" style="right:786px;top:277px">8</div>
<svg style="left:292px;top:292px" width="15" height="13" viewBox="0 0 15 13" ><rect x="3" y="2" width="12" height="11" rx="2" fill="#1C2F52" opacity=".25"/><rect x="3" y="1" width="10" height="9" rx="1.2" fill="#C6DAF0" stroke="#142E58" stroke-width="2"/><path d="M0 4.2h5v-2l3.2 3.3-3.2 3.3v-2h-5z" fill="#1A9A1A" stroke="#0A5A0A" stroke-width=".7"/></svg>
<div class="t b" style="left:314px;top:293px;letter-spacing:.4px">Índices</div>
<svg style="left:316px;top:309px" width="9" height="12" viewBox="0 0 9 12" ><path d="M1 2.5a3.5 2.6 0 0 1 7 0v1.5a3.5 2.3 0 0 1-2 1.8v1l1.2 .8-1.2 1 1 1-1.8 1.8h-.6l-.6-1v-3.6a3.5 2.3 0 0 1-2-1.8z" fill="#E9B66A" stroke="#7A4A14" stroke-width="1"/><rect x="3.5" y="2" width="2" height="1.2" fill="#7A4A14"/></svg>
<div class="t" style="left:334px;top:309px">ID</div>
<div class="t" style="left:420px;top:309px">Código</div>
<div class="t" style="left:520px;top:309px">Clave única</div>
<div class="t" style="right:786px;top:309px">2</div>
<svg style="left:312px;top:324px" width="15" height="13" viewBox="0 0 15 13" ><rect x="3" y="2" width="12" height="11" rx="2" fill="#1C2F52" opacity=".25"/><rect x="3" y="1" width="10" height="9" rx="1.2" fill="#C6DAF0" stroke="#142E58" stroke-width="2"/><path d="M0 4.2h5v-2l3.2 3.3-3.2 3.3v-2h-5z" fill="#1A9A1A" stroke="#0A5A0A" stroke-width=".7"/></svg>
<div class="t" style="left:334px;top:325px"><span style="display:inline-block;transform:scaleX(.89);transform-origin:0 0">NAME</span></div>
<div class="t" style="left:420px;top:325px">Alfabético</div>
<div class="t" style="left:520px;top:325px">Acepta repetidas</div>
<div class="t" style="right:786px;top:325px">16</div>
<svg style="left:312px;top:340px" width="15" height="13" viewBox="0 0 15 13" ><rect x="3" y="2" width="12" height="11" rx="2" fill="#1C2F52" opacity=".25"/><rect x="3" y="1" width="10" height="9" rx="1.2" fill="#C6DAF0" stroke="#142E58" stroke-width="2"/><path d="M0 4.2h5v-2l3.2 3.3-3.2 3.3v-2h-5z" fill="#1A9A1A" stroke="#0A5A0A" stroke-width=".7"/></svg>
<div class="t" style="left:334px;top:341px"><span style="display:inline-block;transform:scaleX(.89);transform-origin:0 0">PALABRAS</span></div>
<div class="t" style="left:420px;top:341px">Palabras</div>
<div class="t" style="left:520px;top:341px">Palabras</div>
<div class="t" style="right:786px;top:341px">10</div>
<svg style="left:312px;top:356px" width="15" height="13" viewBox="0 0 15 13" ><rect x="3" y="2" width="12" height="11" rx="2" fill="#1C2F52" opacity=".25"/><rect x="3" y="1" width="10" height="9" rx="1.2" fill="#C6DAF0" stroke="#142E58" stroke-width="2"/><path d="M0 4.2h5v-2l3.2 3.3-3.2 3.3v-2h-5z" fill="#1A9A1A" stroke="#0A5A0A" stroke-width=".7"/></svg>
<div class="t" style="left:334px;top:357px"><span style="display:inline-block;transform:scaleX(.89);transform-origin:0 0">TROZOS</span></div>
<div class="t" style="left:420px;top:357px">Trozos de palabras</div>
<div class="t" style="left:520px;top:357px">Trozos de palabras</div>
<div class="t" style="right:786px;top:357px">6</div>
<svg style="left:292px;top:371px" width="16" height="16" viewBox="0 0 16 16" ><rect x="3" y="9" width="1" height="1" fill="#222"/><rect x="3" y="11" width="1" height="1" fill="#222"/><rect x="5" y="11" width="1" height="1" fill="#222"/><rect x="3.2" y="7" width="1.2" height="2" fill="#0A2A5A"/><rect x=".5" y=".5" width="7" height="6" rx="2" fill="#2452A8" stroke="#0A2060"/><rect x="2" y="2" width="4" height="2" fill="#4A7AD0" opacity=".7"/><rect x="7.5" y="8.5" width="7" height="6" rx="2" fill="#2452A8" stroke="#0A2060"/><rect x="9" y="10" width="4" height="2" fill="#4A7AD0" opacity=".7"/></svg>
<div class="t b" style="left:314px;top:373px;letter-spacing:.4px">Enlaces plurales</div>
<svg style="left:293px;top:388px" width="16" height="12" viewBox="0 0 16 12" ><rect x="2" y="2" width="14" height="10" rx="2" fill="#1C2F52" opacity="0.25"/><rect x="1" y="1" width="13" height="9" rx="1.2" fill="#BDEBE4" stroke="#142E58" stroke-width="2"/><path d="M3.5 7.5l2.5-2.5M3.2 5.5v2.3h2.3M11.5 3.2l-2.5 2.5M11.8 5.2V3H9.5" stroke="#149A14" stroke-width="1.5" fill="none"/></svg>
<div class="t b" style="left:314px;top:389px;letter-spacing:.4px">Actualizaciones</div>
<svg style="left:293px;top:405px" width="14" height="12" viewBox="0 0 14 12" ><rect x="2" y="2" width="12" height="10" rx="2" fill="#1C2F52" opacity=".25"/><rect x="1" y="1" width="10" height="9" rx="1.2" fill="#C4DCF4" stroke="#142E58" stroke-width="2"/><circle cx="6" cy="5.5" r="2" fill="#142E58"/></svg>
<div class="t b" style="left:314px;top:405px;letter-spacing:.4px">Eventos de tabla</div>
<svg style="left:293px;top:419px" width="16" height="16" viewBox="0 0 16 16" ><defs><linearGradient id="vr" x1="0" y1="0" x2=".6" y2="1"><stop offset="0" stop-color="#F05A78"/><stop offset=".45" stop-color="#D41A30"/><stop offset="1" stop-color="#A80C18"/></linearGradient></defs><rect x=".5" y=".5" width="15" height="15" fill="url(#vr)" stroke="#5A0A14"/><rect x="1" y="1" width="2.5" height="14" fill="#3050A0"/><path d="M4.7 12.5L8 4h2.4l3.3 8.5h-2.3l-.6-1.8h-3.2l-.6 1.8z M8.2 8.7h2l-1-3z" fill="#fff" fill-rule="evenodd"/></svg>
<div class="t b" style="left:314px;top:421px;letter-spacing:.4px">Variables</div>
<div class="a" style="left:269px;top:829px;width:907px;height:17px;background:linear-gradient(#F4F3EE,#FEFEFB 30%,#FBFBF6)"></div>
<div class="a sbtn" style="left:270px;top:830px;width:15px;height:15px"></div>
<svg style="left:274px;top:834px" width="6" height="8" viewBox="0 0 6 8" ><path d="M4.5 .5l-3.5 3.5 3.5 3.5" fill="none" stroke="#4D6185" stroke-width="1.8"/></svg>
<div class="a sbtn" style="left:1160px;top:830px;width:15px;height:15px"></div>
<svg style="left:1165px;top:834px" width="6" height="8" viewBox="0 0 6 8" ><path d="M1 .5l3.5 3.5-3.5 3.5" fill="none" stroke="#4D6185" stroke-width="1.8"/></svg>
<div class="a thumb" style="left:287px;top:831px;width:713px;height:14px;background:linear-gradient(#CAD8FC,#C2D3FC 50%,#B6CAF8)"></div>
<div class="a" style="left:639px;top:833px;width:1px;height:8px;background:#F4F8FE"></div><div class="a" style="left:640px;top:834px;width:1px;height:8px;background:#8EA8E4"></div>
<div class="a" style="left:641px;top:833px;width:1px;height:8px;background:#F4F8FE"></div><div class="a" style="left:642px;top:834px;width:1px;height:8px;background:#8EA8E4"></div>
<div class="a" style="left:643px;top:833px;width:1px;height:8px;background:#F4F8FE"></div><div class="a" style="left:644px;top:834px;width:1px;height:8px;background:#8EA8E4"></div>
<div class="a" style="left:645px;top:833px;width:1px;height:8px;background:#F4F8FE"></div><div class="a" style="left:646px;top:834px;width:1px;height:8px;background:#8EA8E4"></div>
<div class="a ptitle" style="left:1184px;top:83px;width:256px"></div>
<div class="t" style="left:1188px;top:86px">Propiedades</div>
<svg style="left:1413px;top:87px" width="9" height="9" viewBox="0 0 9 9" ><rect x="2.5" y=".5" width="6" height="5" fill="none" stroke="#000"/><rect x="2" y="0" width="7" height="2" fill="#000"/><rect x=".5" y="3.5" width="6" height="5" fill="#fff" stroke="#000"/><rect x="0" y="3" width="7" height="2" fill="#000"/></svg>
<svg style="left:1428px;top:88px" width="9" height="8" viewBox="0 0 9 8" ><path d="M1 1l7 6M8 1l-7 6" stroke="#000" stroke-width="1.6"/></svg>
<div class="a" style="left:1403px;top:54px;width:37px;height:38px;border:1px solid #5A5A5A;border-right:none;background:#F8F8FA"></div>
<svg style="left:1413px;top:60px" width="18" height="26" viewBox="0 0 18 26" ><path d="M0 1h17l-8.5 7z M0 8h17l-8.5 7z M0 15h17l-8.5 10z" fill="#E0552A"/></svg>
<svg style="left:1194px;top:112px" width="32" height="31" viewBox="0 0 32 31" ><defs><linearGradient id="bf" x1="0" y1="0" x2="1" y2="1"><stop offset="0" stop-color="#2A78E0"/><stop offset="1" stop-color="#0F4EB8"/></linearGradient></defs><path d="M0 22l5 5v-5z" fill="#6A6A60" opacity=".55"/><path d="M4.5 7.5L9 5.5l1-1.5h3l1 1 13-4 4 2v14L8 29.5l-3.5-3z" fill="url(#bf)" stroke="#0A2A70" stroke-width="1"/><path d="M7 9v18M27 2.5v15" stroke="#0C3C98" stroke-width="1.2"/><path d="M8 10l19-6M8 13l19-6" stroke="#3C8AF0" stroke-width=".7"/></svg>
<div class="t b" style="left:1231px;top:122px">USUARIOS</div><div class="t" style="left:1407px;top:122px">Tabla</div>
<div class="a" style="left:1184px;top:153px;width:256px;height:383px;border:1px solid #919B9C;background:#ECE9D8"></div>
<div class="a hdr" style="left:1185px;top:154px;width:239px;height:21px"></div>
<div class="a hsep" style="left:1336px;top:157px;height:15px"></div>
<div class="t" style="left:1189px;top:159px">Descripción</div><div class="t" style="left:1342px;top:159px">Valor</div>
<div class="a" style="left:1204px;top:196px;width:218px;height:221px;background:#fff"></div>
<div class="a" style="left:1337px;top:196px;width:1px;height:221px;background:#EDEBE0"></div>
<div class="a dv" style="left:1195px;top:176px;height:341px"></div>
<div class="a exp" style="left:1191px;top:182px"></div>
<div class="a dh" style="left:1200px;top:186px;width:6px"></div>
<div class="t" style="left:1208px;top:180px">Propiedades</div>
<div class="a" style="left:1204px;top:215px;width:218px;height:1px;background:#EDEBE0"></div>
<div class="a dh" style="left:1216px;top:206px;width:8px"></div>
<div class="t" style="left:1228px;top:200px;color:#000">Identificador</div>
<div class="t b" style="left:1341px;top:200px;color:#000">USUARIOS</div>
<div class="a" style="left:1204px;top:235px;width:218px;height:1px;background:#EDEBE0"></div>
<div class="a dh" style="left:1216px;top:226px;width:8px"></div>
<div class="t" style="left:1228px;top:220px;color:#000">Nombre</div>
<div class="t b" style="left:1341px;top:220px;color:#000;letter-spacing:.4px">Usuarios</div>
<div class="a" style="left:1204px;top:255px;width:218px;height:1px;background:#EDEBE0"></div>
<div class="a dh" style="left:1216px;top:246px;width:8px"></div>
<div class="t" style="left:1228px;top:240px;color:#000">Estilos</div>
<div class="a" style="left:1204px;top:275px;width:218px;height:1px;background:#EDEBE0"></div>
<div class="a dh" style="left:1216px;top:266px;width:8px"></div>
<div class="t" style="left:1228px;top:260px;color:#000">Comentarios</div>
<div class="a" style="left:1204px;top:295px;width:218px;height:1px;background:#EDEBE0"></div>
<div class="a dh" style="left:1216px;top:286px;width:8px"></div>
<div class="t" style="left:1228px;top:280px;color:#000">Nombre singular</div>
<div class="t b" style="left:1341px;top:280px;color:#000;letter-spacing:.4px">Usuario</div>
<div class="a" style="left:1204px;top:315px;width:218px;height:1px;background:#EDEBE0"></div>
<div class="a dh" style="left:1216px;top:306px;width:8px"></div>
<div class="t" style="left:1228px;top:300px;color:#000">Tipo</div>
<div class="t b" style="left:1341px;top:300px;color:#000;letter-spacing:.4px">Maestro</div>
<div class="a" style="left:1204px;top:337px;width:218px;height:1px;background:#EDEBE0"></div>
<div class="a dh" style="left:1216px;top:327px;width:8px"></div>
<div class="t" style="left:1228px;top:320px;color:#8A8A8A">Tabla de datos padre</div>
<svg style="left:1341px;top:320px" width="16" height="12" viewBox="0 0 16 12" ><path d="M.5 .5h5l1 1.5h9v9.5h-15z" fill="#9A9A92" stroke="#6E6E66"/><rect x="1.5" y="3" width="13" height="8" fill="#B4B4AC"/></svg>
<div class="a" style="left:1204px;top:357px;width:218px;height:1px;background:#EDEBE0"></div>
<div class="a dh" style="left:1216px;top:348px;width:8px"></div>
<div class="t" style="left:1228px;top:342px;color:#000">Reside en</div>
<div class="t b" style="left:1341px;top:342px;color:#000;letter-spacing:.4px">Disco</div>
<div class="a" style="left:1204px;top:377px;width:218px;height:1px;background:#EDEBE0"></div>
<div class="a dh" style="left:1216px;top:368px;width:8px"></div>
<div class="t" style="left:1228px;top:362px;color:#8A8A8A">Longitud del registro</div>
<div class="t b" style="left:1341px;top:362px;color:#6A6A6A">97</div>
<div class="a" style="left:1204px;top:397px;width:218px;height:1px;background:#EDEBE0"></div>
<div class="a dh" style="left:1216px;top:388px;width:8px"></div>
<div class="t" style="left:1228px;top:382px;color:#8A8A8A">Número de campos</div>
<div class="t b" style="left:1341px;top:382px;color:#6A6A6A">7</div>
<div class="a dh" style="left:1216px;top:408px;width:8px"></div>
<div class="t" style="left:1228px;top:402px;color:#8A8A8A">Número de indices</div>
<div class="t b" style="left:1341px;top:402px;color:#6A6A6A">4</div>
<div class="a dv" style="left:1215px;top:197px;height:211px"></div>
<div class="a exp plus" style="left:1191px;top:425px"></div>
<div class="a dh" style="left:1200px;top:429px;width:6px"></div>
<svg style="left:1208px;top:422px" width="14" height="13" viewBox="0 0 14 13" ><rect x="2" y="2" width="12" height="11" rx="2" fill="#1C2F52" opacity=".15"/><rect x="1" y="1" width="10" height="9" rx="1.2" fill="#C8DCF4" stroke="#12305E" stroke-width="2"/><rect x="6" y="2" width="5" height="7" fill="#B4CCEA" opacity=".6"/><path d="M4.2 3v5.2M4 3.5h2.6M4 5.7h2.2" stroke="#111" stroke-width="1.2" fill="none"/></svg>
<div class="t" style="left:1230px;top:423px">Campos</div>
<div class="a exp plus" style="left:1191px;top:447px"></div>
<div class="a dh" style="left:1200px;top:451px;width:6px"></div>
<svg style="left:1206px;top:444px" width="15" height="13" viewBox="0 0 15 13" ><rect x="3" y="2" width="12" height="11" rx="2" fill="#1C2F52" opacity=".25"/><rect x="3" y="1" width="10" height="9" rx="1.2" fill="#C6DAF0" stroke="#142E58" stroke-width="2"/><path d="M0 4.2h5v-2l3.2 3.3-3.2 3.3v-2h-5z" fill="#1A9A1A" stroke="#0A5A0A" stroke-width=".7"/></svg>
<div class="t" style="left:1230px;top:445px">Índices</div>
<div class="a dh" style="left:1196px;top:473px;width:10px"></div>
<svg style="left:1207px;top:464px" width="16" height="16" viewBox="0 0 16 16" ><rect x="3" y="9" width="1" height="1" fill="#222"/><rect x="3" y="11" width="1" height="1" fill="#222"/><rect x="5" y="11" width="1" height="1" fill="#222"/><rect x="3.2" y="7" width="1.2" height="2" fill="#0A2A5A"/><rect x=".5" y=".5" width="7" height="6" rx="2" fill="#2452A8" stroke="#0A2060"/><rect x="2" y="2" width="4" height="2" fill="#4A7AD0" opacity=".7"/><rect x="7.5" y="8.5" width="7" height="6" rx="2" fill="#2452A8" stroke="#0A2060"/><rect x="9" y="10" width="4" height="2" fill="#4A7AD0" opacity=".7"/></svg>
<div class="t" style="left:1230px;top:467px">Enlaces plurales</div>
<div class="a dh" style="left:1196px;top:495px;width:10px"></div>
<svg style="left:1208px;top:488px" width="16" height="12" viewBox="0 0 16 12" ><rect x="2" y="2" width="14" height="10" rx="2" fill="#1C2F52" opacity="0.25"/><rect x="1" y="1" width="13" height="9" rx="1.2" fill="#BDEBE4" stroke="#142E58" stroke-width="2"/><path d="M3.5 7.5l2.5-2.5M3.2 5.5v2.3h2.3M11.5 3.2l-2.5 2.5M11.8 5.2V3H9.5" stroke="#149A14" stroke-width="1.5" fill="none"/></svg>
<div class="t" style="left:1230px;top:489px">Actualizaciones</div>
<div class="a dh" style="left:1196px;top:517px;width:10px"></div>
<svg style="left:1209px;top:511px" width="14" height="12" viewBox="0 0 14 12" ><rect x="2" y="2" width="12" height="10" rx="2" fill="#1C2F52" opacity=".25"/><rect x="1" y="1" width="10" height="9" rx="1.2" fill="#C4DCF4" stroke="#142E58" stroke-width="2"/><circle cx="6" cy="5.5" r="2" fill="#142E58"/></svg>
<div class="t" style="left:1230px;top:511px">Eventos de tabla</div>
<div class="a" style="left:1185px;top:519px;width:254px;height:15px;background:#ECE9D8"></div>
<div class="a" style="left:1422px;top:154px;width:17px;height:364px;background:linear-gradient(90deg,#F4F3EE,#FEFEFB 30%,#FBFBF6)"></div>
<div class="a sbtn" style="left:1423px;top:155px;width:15px;height:15px"></div>
<svg style="left:1426px;top:159px" width="8" height="6" viewBox="0 0 8 6" ><path d="M.5 4.5l3.5-3.5 3.5 3.5" fill="none" stroke="#4D6185" stroke-width="1.8"/></svg>
<div class="a sbtn" style="left:1423px;top:502px;width:15px;height:15px"></div>
<svg style="left:1426px;top:507px" width="8" height="6" viewBox="0 0 8 6" ><path d="M.5 1l3.5 3.5 3.5-3.5" fill="none" stroke="#4D6185" stroke-width="1.8"/></svg>
<div class="a thumb" style="left:1424px;top:172px;width:14px;height:292px;background:linear-gradient(90deg,#CAD8FC,#C2D3FC 50%,#B6CAF8)"></div>
<div class="a" style="left:1426px;top:314px;width:8px;height:1px;background:#F4F8FE"></div><div class="a" style="left:1427px;top:315px;width:8px;height:1px;background:#8EA8E4"></div>
<div class="a" style="left:1426px;top:316px;width:8px;height:1px;background:#F4F8FE"></div><div class="a" style="left:1427px;top:317px;width:8px;height:1px;background:#8EA8E4"></div>
<div class="a" style="left:1426px;top:318px;width:8px;height:1px;background:#F4F8FE"></div><div class="a" style="left:1427px;top:319px;width:8px;height:1px;background:#8EA8E4"></div>
<div class="a" style="left:1426px;top:320px;width:8px;height:1px;background:#F4F8FE"></div><div class="a" style="left:1427px;top:321px;width:8px;height:1px;background:#8EA8E4"></div>
<div class="a" style="left:1185px;top:518px;width:238px;height:17px;background:linear-gradient(#F4F3EE,#FEFEFB 30%,#FBFBF6)"></div>
<div class="a sbtn" style="left:1186px;top:519px;width:15px;height:15px"></div>
<svg style="left:1190px;top:523px" width="6" height="8" viewBox="0 0 6 8" ><path d="M4.5 .5l-3.5 3.5 3.5 3.5" fill="none" stroke="#4D6185" stroke-width="1.8"/></svg>
<div class="a sbtn" style="left:1407px;top:519px;width:15px;height:15px"></div>
<svg style="left:1412px;top:523px" width="6" height="8" viewBox="0 0 6 8" ><path d="M1 .5l3.5 3.5-3.5 3.5" fill="none" stroke="#4D6185" stroke-width="1.8"/></svg>
<div class="a thumb" style="left:1202px;top:520px;width:189px;height:14px;background:linear-gradient(#CAD8FC,#C2D3FC 50%,#B6CAF8)"></div>
<div class="a" style="left:1292px;top:522px;width:1px;height:8px;background:#F4F8FE"></div><div class="a" style="left:1293px;top:523px;width:1px;height:8px;background:#8EA8E4"></div>
<div class="a" style="left:1294px;top:522px;width:1px;height:8px;background:#F4F8FE"></div><div class="a" style="left:1295px;top:523px;width:1px;height:8px;background:#8EA8E4"></div>
<div class="a" style="left:1296px;top:522px;width:1px;height:8px;background:#F4F8FE"></div><div class="a" style="left:1297px;top:523px;width:1px;height:8px;background:#8EA8E4"></div>
<div class="a" style="left:1298px;top:522px;width:1px;height:8px;background:#F4F8FE"></div><div class="a" style="left:1299px;top:523px;width:1px;height:8px;background:#8EA8E4"></div>
<div class="a" style="left:1423px;top:518px;width:15px;height:16px;background:#ECE9D8"></div>
<div class="a ptitle" style="left:1184px;top:542px;width:256px"></div>
<div class="t" style="left:1188px;top:545px">Subobjetos</div>
<svg style="left:1413px;top:546px" width="9" height="9" viewBox="0 0 9 9" ><rect x="2.5" y=".5" width="6" height="5" fill="none" stroke="#000"/><rect x="2" y="0" width="7" height="2" fill="#000"/><rect x=".5" y="3.5" width="6" height="5" fill="#fff" stroke="#000"/><rect x="0" y="3" width="7" height="2" fill="#000"/></svg>
<svg style="left:1428px;top:547px" width="9" height="8" viewBox="0 0 9 8" ><path d="M1 1l7 6M8 1l-7 6" stroke="#000" stroke-width="1.6"/></svg>
<div class="a pane" style="left:1185px;top:585px;width:218px;height:263px"></div>
<div class="a tab" style="left:1264px;top:565px;width:68px;height:21px"></div>
<svg style="left:1268px;top:567px" width="15" height="13" viewBox="0 0 15 13" ><rect x="3" y="2" width="12" height="11" rx="2" fill="#1C2F52" opacity=".25"/><rect x="3" y="1" width="10" height="9" rx="1.2" fill="#C6DAF0" stroke="#142E58" stroke-width="2"/><path d="M0 4.2h5v-2l3.2 3.3-3.2 3.3v-2h-5z" fill="#1A9A1A" stroke="#0A5A0A" stroke-width=".7"/></svg>
<div class="t" style="left:1292px;top:569px">Índices</div>
<div class="a tab act" style="left:1185px;top:562px;width:79px;height:24px"></div>
<svg style="left:1191px;top:566px" width="14" height="13" viewBox="0 0 14 13" ><rect x="2" y="2" width="12" height="11" rx="2" fill="#1C2F52" opacity=".15"/><rect x="1" y="1" width="10" height="9" rx="1.2" fill="#C8DCF4" stroke="#12305E" stroke-width="2"/><rect x="6" y="2" width="5" height="7" fill="#B4CCEA" opacity=".6"/><path d="M4.2 3v5.2M4 3.5h2.6M4 5.7h2.2" stroke="#111" stroke-width="1.2" fill="none"/></svg>
<div class="t" style="left:1214px;top:568px">Campos</div>
<div class="a list" style="left:1186px;top:587px;width:216px;height:260px"></div>
<div class="a hdr" style="left:1187px;top:588px;width:214px;height:22px"></div>
<div class="a hsep" style="left:1285px;top:591px;height:15px"></div>
<div class="t" style="left:1191px;top:593px">Identificador</div><div class="t" style="left:1291px;top:593px">Nombre</div>
<div class="t" style="left:1190px;top:611px">ID</div><div class="t" style="left:1290px;top:611px">Código</div>
<div class="t" style="left:1190px;top:625px"><span style="display:inline-block;transform:scaleX(.89);transform-origin:0 0">USUARIO</span></div><div class="t" style="left:1290px;top:625px">Usuario</div>
<div class="t" style="left:1190px;top:639px"><span style="display:inline-block;transform:scaleX(.89);transform-origin:0 0">NOMBRE</span></div><div class="t" style="left:1290px;top:639px">Nombres</div>
<div class="t" style="left:1190px;top:653px"><span style="display:inline-block;transform:scaleX(.89);transform-origin:0 0">APELLIDO</span></div><div class="t" style="left:1290px;top:653px">Apellidos</div>
<div class="t" style="left:1190px;top:667px"><span style="display:inline-block;transform:scaleX(.89);transform-origin:0 0">TELEFONO</span></div><div class="t" style="left:1290px;top:667px">Teléfono</div>
<div class="t" style="left:1190px;top:681px"><span style="display:inline-block;transform:scaleX(.89);transform-origin:0 0">CELULAR</span></div><div class="t" style="left:1290px;top:681px">Celular</div>
<div class="t" style="left:1190px;top:695px"><span style="display:inline-block;transform:scaleX(.89);transform-origin:0 0">FOTO</span></div><div class="t" style="left:1290px;top:695px">Foto</div>
<div class="a" style="left:1405px;top:560px;width:1px;height:290px;background:#FBFAF4"></div><div class="a" style="left:1405px;top:561px;width:35px;height:1px;background:#F8F6EE"></div>
<div class="a" style="left:1411px;top:566px;width:23px;height:2px;background:repeating-linear-gradient(to right,#8E8C7E 0 2px,transparent 2px 4px)"></div>
<svg style="left:1415px;top:579px" width="14" height="15" viewBox="0 0 14 15" ><path d="M7 .8l5.8 6.2h-3.3v6.5h-5v-6.5h-3.3z" fill="#B0AE9E" stroke="#9A988A"/></svg>
<svg style="left:1415px;top:610px" width="14" height="15" viewBox="0 0 14 15" ><path d="M7 14.2l5.8-6.2h-3.3v-6.5h-5v6.5h-3.3z" fill="#B0AE9E" stroke="#9A988A"/></svg>
<div class="a sep" style="left:1408px;top:635px;width:28px;height:2px;border-right:none;border-bottom:1px solid #fff;height:2px;background:#D0CDBD"></div>
<svg style="left:1415px;top:646px" width="14" height="14" viewBox="0 0 14 14" ><circle cx="7" cy="7" r="6.5" fill="#A2A098"/><circle cx="7" cy="6" r="5" fill="#BAB8B0"/><path d="M4.5 4.5l5 5M9.5 4.5l-5 5" stroke="#F4F4F0" stroke-width="2"/></svg>
<div class="a sep" style="left:1408px;top:671px;width:28px;height:2px;border-right:none;border-bottom:1px solid #fff;height:2px;background:#D0CDBD"></div>
<svg style="left:1416px;top:682px" width="14" height="13" viewBox="0 0 14 13" ><rect x="2" y="2" width="12" height="11" rx="2" fill="#1C2F52" opacity=".15"/><rect x="1" y="1" width="10" height="9" rx="1.2" fill="#C8DCF4" stroke="#12305E" stroke-width="2"/><rect x="6" y="2" width="5" height="7" fill="#B4CCEA" opacity=".6"/><path d="M4.2 3v5.2M4 3.5h2.6M4 5.7h2.2" stroke="#111" stroke-width="1.2" fill="none"/></svg>
<svg style="left:1413px;top:712px" width="15" height="13" viewBox="0 0 15 13" ><rect x="3" y="2" width="12" height="11" rx="2" fill="#1C2F52" opacity=".25"/><rect x="3" y="1" width="10" height="9" rx="1.2" fill="#C6DAF0" stroke="#142E58" stroke-width="2"/><path d="M0 4.2h5v-2l3.2 3.3-3.2 3.3v-2h-5z" fill="#1A9A1A" stroke="#0A5A0A" stroke-width=".7"/></svg>
<svg style="left:1414px;top:742px" width="16" height="12" viewBox="0 0 16 12" ><rect x="2" y="2" width="14" height="10" rx="2" fill="#1C2F52" opacity="0.25"/><rect x="1" y="1" width="13" height="9" rx="1.2" fill="#BDEBE4" stroke="#142E58" stroke-width="2"/><path d="M3.5 7.5l2.5-2.5M3.2 5.5v2.3h2.3M11.5 3.2l-2.5 2.5M11.8 5.2V3H9.5" stroke="#149A14" stroke-width="1.5" fill="none"/></svg>
<svg style="left:1414px;top:771px" width="16" height="16" viewBox="0 0 16 16" ><defs><linearGradient id="vr" x1="0" y1="0" x2=".6" y2="1"><stop offset="0" stop-color="#F05A78"/><stop offset=".45" stop-color="#D41A30"/><stop offset="1" stop-color="#A80C18"/></linearGradient></defs><rect x=".5" y=".5" width="15" height="15" fill="url(#vr)" stroke="#5A0A14"/><rect x="1" y="1" width="2.5" height="14" fill="#3050A0"/><path d="M4.7 12.5L8 4h2.4l3.3 8.5h-2.3l-.6-1.8h-3.2l-.6 1.8z M8.2 8.7h2l-1-3z" fill="#fff" fill-rule="evenodd"/></svg>
<div class="a" style="left:1404px;top:849px;width:36px;height:1px;background:#D0CDBD"></div>
<div class="a" style="left:0;top:870px;width:1440px;height:30px;background:linear-gradient(#3168D5 0,#3E82EC 1px,#2F75E6 3px,#2762DE 8px,#245DDB 20px,#2155D0 26px,#1C48BC 30px)"></div>
<div class="a" style="left:0;top:870px;width:102px;height:30px;border-radius:0 12px 12px 0;background:linear-gradient(#2F7A2F 0,#5CB65C 2px,#48A848 6px,#3A9A3A 16px,#359535 24px,#2C7E2C 30px);box-shadow:inset -3px 0 4px rgba(20,70,20,.5),1px 0 2px #1A4A8A"></div>
<svg style="left:10px;top:876px" width="20" height="18" viewBox="0 0 20 18" ><path d="M1 3c2-1.5 5-1.5 8 0v6c-3-1.5-6-1.5-8 0z" fill="#F2562A"/><path d="M10 3c2.5 1.3 5.5 1.3 8 0v6c-2.5 1.3-5.5 1.3-8 0z" fill="#6CC62A"/><path d="M1 10c2-1.5 5-1.5 8 0v6c-3-1.5-6-1.5-8 0z" fill="#2E8AF2"/><path d="M10 10c2.5 1.3 5.5 1.3 8 0v6c-2.5 1.3-5.5 1.3-8 0z" fill="#F8C828"/></svg>
<div class="t b" style="left:35px;top:874px;font-size:17px;line-height:20px;font-style:italic;color:#fff;text-shadow:1px 1px 1px #1A4A1A">Inicio</div>
<div class="a" style="left:113px;top:873px;width:157px;height:24px;border-radius:3px;background:linear-gradient(#4A8CF6,#3C81F3 30%,#3777EE 70%,#3470E6);border:1px solid #2A60D0"></div>
<div class="t" style="left:142px;top:879px;color:#fff">aMSN - mauricio2040...</div>
<div class="a" style="left:273px;top:873px;width:157px;height:24px;border-radius:3px;background:linear-gradient(#4A8CF6,#3C81F3 30%,#3777EE 70%,#3470E6);border:1px solid #2A60D0"></div>
<div class="t" style="left:302px;top:879px;color:#fff">vDevelop - 7.0.0.7181</div>
<div class="a" style="left:433px;top:873px;width:157px;height:24px;border-radius:3px;background:linear-gradient(#1A50B8,#1E4FB0 50%,#2A5CC0);border:1px solid #1A3C8C"></div>
<div class="t" style="left:462px;top:879px;color:#fff">vDevelop - 7.0.0.7181</div>
<div class="a" style="left:593px;top:873px;width:157px;height:24px;border-radius:3px;background:linear-gradient(#4A8CF6,#3C81F3 30%,#3777EE 70%,#3470E6);border:1px solid #2A60D0"></div>
<div class="t" style="left:622px;top:879px;color:#fff">Foros | Velneo V7 - M...</div>
<div class="a" style="left:753px;top:873px;width:157px;height:24px;border-radius:3px;background:linear-gradient(#4A8CF6,#3C81F3 30%,#3777EE 70%,#3470E6);border:1px solid #2A60D0"></div>
<div class="t" style="left:782px;top:879px;color:#fff">Documento1 - Micros...</div>
<svg style="left:121px;top:877px" width="17" height="15" viewBox="0 0 17 15" ><circle cx="5" cy="5" r="3" fill="#4AA8E8"/><circle cx="11" cy="5" r="3" fill="#5AC848"/><path d="M1 14c0-4 2-6 4-6s4 2 4 6zM7 14c0-4 2-6 4-6s4 2 4 6z" fill="#3A9A3A"/></svg>
<svg style="left:281px;top:877px" width="16" height="16" viewBox="0 0 16 16" ><rect x="1" y="1" width="14" height="14" rx="2" fill="#5A6070"/><path d="M8 3C5.3 4 4.6 7 5 10l3 3.5 3-3.5c.4-3-.3-6-3-7z" fill="#C8C8C8" stroke="#fff" stroke-width="1"/><path d="M8.2 4C6.5 4.8 5.8 7.5 6 10l1.6 2c0-2.5.5-3.5 1.3-5 .6-1.2.3-2.5-.7-3z" fill="#0A0A0A"/></svg>
<svg style="left:441px;top:877px" width="16" height="16" viewBox="0 0 16 16" ><rect x="1" y="1" width="14" height="14" rx="2" fill="#5A6070"/><path d="M8 3C5.3 4 4.6 7 5 10l3 3.5 3-3.5c.4-3-.3-6-3-7z" fill="#C8C8C8" stroke="#fff" stroke-width="1"/><path d="M8.2 4C6.5 4.8 5.8 7.5 6 10l1.6 2c0-2.5.5-3.5 1.3-5 .6-1.2.3-2.5-.7-3z" fill="#0A0A0A"/></svg>
<svg style="left:601px;top:876px" width="16" height="16" viewBox="0 0 16 16" ><circle cx="8" cy="8" r="7.5" fill="#2C4A9A"/><path d="M8 .5a7.5 7.5 0 1 1-7.3 9c1.5 2 4 3 6 2 3-1.5 3-5 1-6.5-1.5-1-1-3 .5-3.5-1-.5-2.5-.2-3.5.5C5 1 6.5.5 8 .5z" fill="#F07A10"/></svg>
<svg style="left:761px;top:876px" width="17" height="16" viewBox="0 0 17 16" ><rect x="3.5" y=".5" width="12" height="15" fill="#fff" stroke="#2A4A8A"/><path d="M6 4h8M6 7h8M6 10h8M6 13h8" stroke="#7A9ACA"/><rect x=".5" y="3.5" width="9" height="9" fill="#2A5AB0" stroke="#1A3A80"/><path d="M2 5.5l1.2 5 1.3-3.5 1.3 3.5 1.2-5" stroke="#fff" fill="none" stroke-width=".9"/></svg>
<div class="a" style="left:1293px;top:870px;width:147px;height:30px;border-left:1px solid #1042AF;background:linear-gradient(#1C9AF2 0,#22A4F6 2px,#149AEE 6px,#0E8EE4 20px,#1280D6 30px)"></div>
<div class="t" style="left:1258px;top:879px;color:#fff">ES</div>
<div class="t" style="left:1398px;top:879px;color:#fff">10:31</div>
<svg style="left:1284px;top:877px" width="17" height="17" viewBox="0 0 17 17" ><circle cx="8.5" cy="8.5" r="8" fill="#3A8CF0" stroke="#fff" stroke-width="1"/><path d="M10 4.5l-4 4 4 4" stroke="#fff" stroke-width="2" fill="none"/></svg>
<svg style="left:1306px;top:877px" width="15" height="15" viewBox="0 0 15 15" ><path d="M1 11l9-9 4 4-9 9z" fill="#F8B830" stroke="#8A5A10" stroke-width=".8"/><path d="M4 8l3 3M7 5l3 3" stroke="#8A5A10"/></svg>
<svg style="left:1323px;top:877px" width="15" height="15" viewBox="0 0 15 15" ><path d="M1 6l6-3 7 3v7l-7 2-6-2z" fill="#88C848" stroke="#4A8A1A" stroke-width=".6"/><path d="M7 3v12M1 6l6 3 7-3" stroke="#F0A030" stroke-width="1"/><path d="M5 0l5 3-5 3z" fill="#fff"/></svg>
<svg style="left:1339px;top:876px" width="17" height="17" viewBox="0 0 17 17" ><rect x="5" y="1" width="9" height="7" fill="#C8D8F0" stroke="#3A5A8A" stroke-width=".6"/><rect x="1" y="7" width="9" height="7" fill="#C8D8F0" stroke="#3A5A8A" stroke-width=".6"/><rect x="3" y="14" width="5" height="2" fill="#888"/></svg>
<svg style="left:1358px;top:877px" width="16" height="16" viewBox="0 0 16 16" ><circle cx="8" cy="8" r="7.5" fill="#7A8AA8"/><circle cx="8" cy="8" r="6" fill="#3A4A6A"/><text x="4.5" y="12" font-size="11" font-family="Liberation Sans" font-weight="bold" fill="#fff">a</text></svg>
<svg style="left:1376px;top:876px" width="15" height="17" viewBox="0 0 15 17" ><path d="M7.5 .5l6.5 2.5v6c0 4-3 6.5-6.5 7.5C4 15.5 1 13 1 9V3z" fill="#D81E1E" stroke="#fff" stroke-width=".8"/><path d="M5 6l5 5M10 6l-5 5" stroke="#fff" stroke-width="1.6"/></svg>
</body></html>
